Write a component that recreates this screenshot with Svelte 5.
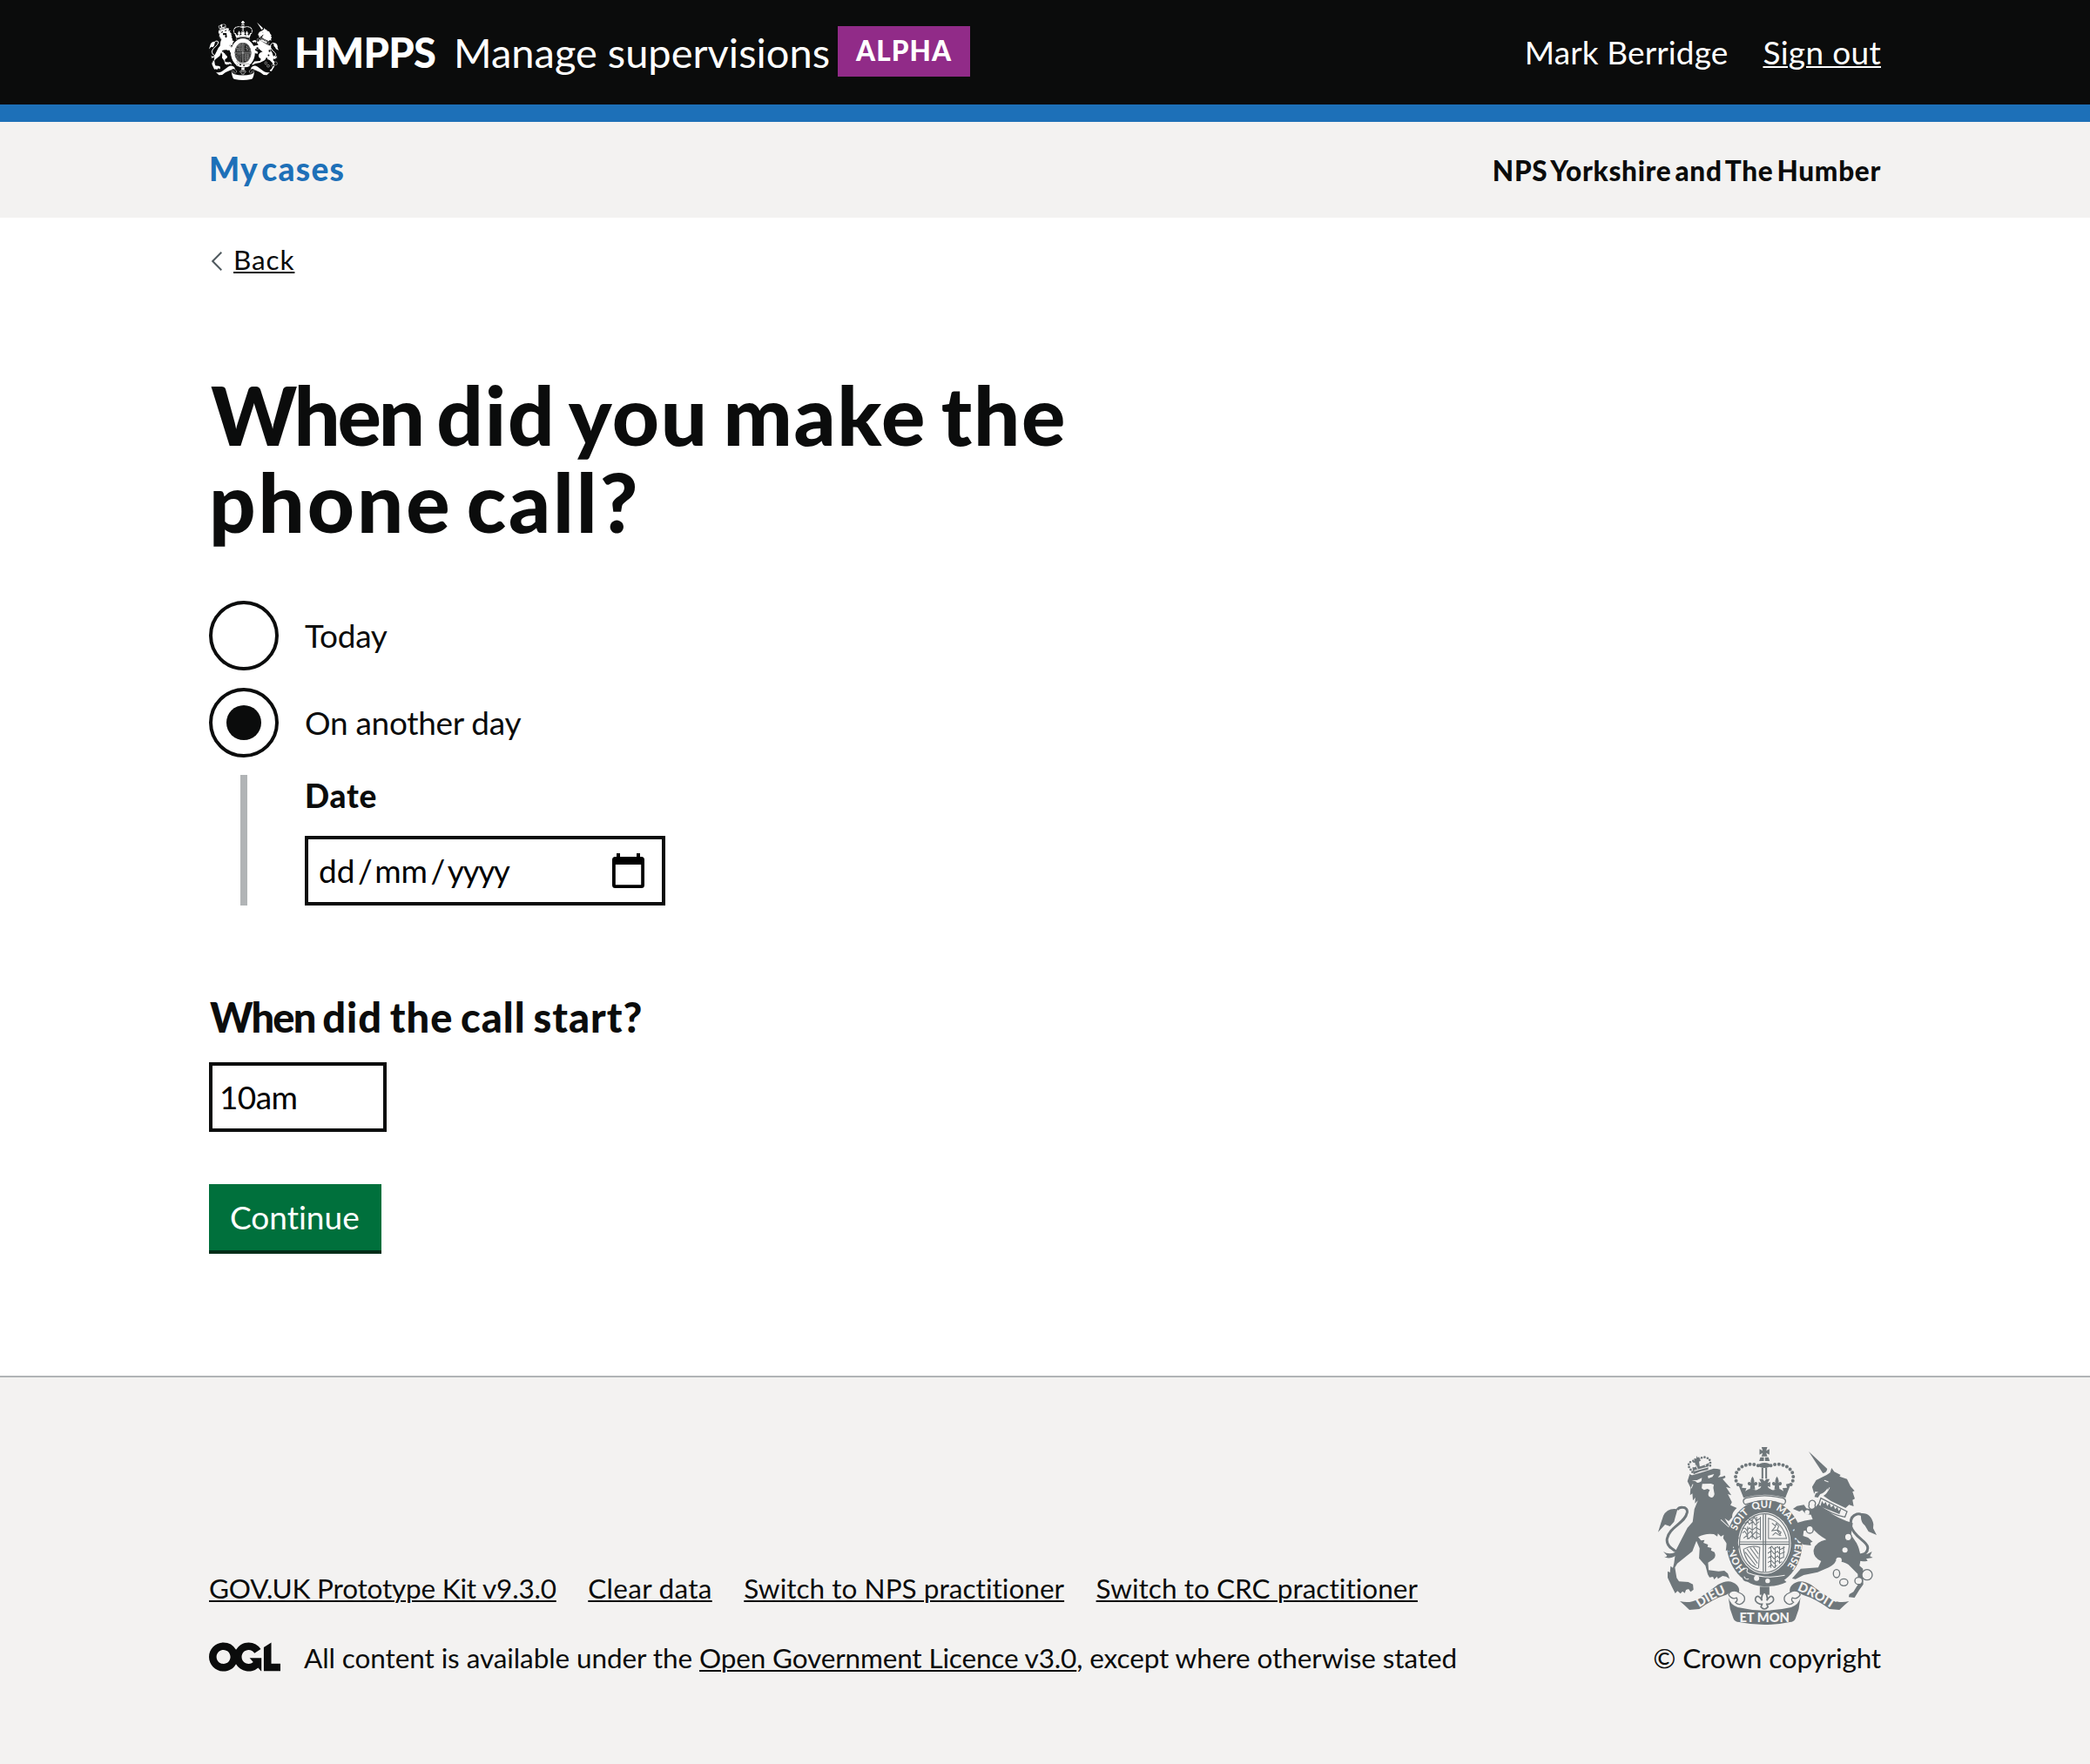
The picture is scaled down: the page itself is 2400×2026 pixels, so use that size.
<script>
  let when = $state('other');
  let startTime = $state('10am');
  const footerLinks = [
    'GOV.UK Prototype Kit v9.3.0',
    'Clear data',
    'Switch to NPS practitioner',
    'Switch to CRC practitioner'
  ];
  const motto = [
    { word: 'HONI', at: '0%' },
    { word: 'SOIT', at: '25.5%' },
    { word: 'QUI', at: '42.5%' },
    { word: 'MAL', at: '57%' },
    { word: 'Y', at: '72.5%' },
    { word: 'PENSE', at: '79%' }
  ];
</script>

{#snippet crest(kind)}
  <svg class="crest {kind}" viewBox="72 66 752 612" preserveAspectRatio="none" aria-hidden="true">
    <!-- royal crown -->
    <path d="M428 66h20l-4 13 11-6v19l-11-6 4 12h-20l4-12-11 6V73l11 6zM424 101h12v13h-16zM440 101h12l4 13h-16z" />
    <ellipse cx="438" cy="129" rx="21" ry="9" />
    <path class="beads" d="M416 130C385 117 347 132 340 160c-4 17 2 31 13 42M460 130c31-13 69 2 76 30 4 17-2 31-13 42" />
    <path d="M428 138h6v37h-6zM441 138h6v37h-6z" />
    <path d="M420 176h12l6 8 6-8h12l-7 14 9-4v18l-9-4 6 14h-34l6-14-9 4v-18l9 4z" />
    <path d="M397 167q9 12 5 22 10-8 12 3-1 8-10 6l2 14h-18l2-14q-9 2-10-6 2-11 12-3-4-10 5-22zM481 167q9 12 5 22 10-8 12 3-1 8-10 6l2 14h-18l2-14q-9 2-10-6 2-11 12-3-4-10 5-22z" />
    <path d="M346 190l18 4-4 12 16 2-4 10q12-10 22-9 16 10 24 1 20-12 40 0 8 9 24-1 10-1 22 9l-4-10 16-2-4-12 18-4-20 51Q438 219 366 241z" />
    <path class="outline" d="M374 242q64-17 128 0 11 4 8 14-3 10-12 6-60-20-120 0-9 4-12-6-3-10 8-14z" />

    <!-- garter and shield -->
    <ellipse cx="438" cy="397" rx="130" ry="149" />
    <ellipse class="hole" cx="438" cy="397" rx="91" ry="106" />
    <ellipse class="line" cx="438" cy="397" rx="86" ry="101" />
    <path class="line" d="M434 298v198M442 298v198M353 393h170M353 401h170" />
    <path class="thin" d="M362 346h10l6 8 8-10 10 8 12-9 14 8M370 330l10-8 6 10 12-10 8 12 14-11M384 312l8 8 12-12 6 12 12-8M362 362l8-6 8 12 12-12 8 12 10-10 14 9M366 380l10-8 8 10 12-12 10 12 16-9M380 340v44M396 316v66M411 306v78M424 306v80" />
    <path class="thin" d="M452 311q48 15 62 70h-62zM464 328l12 10 3-9 8 10-5 12 13 9-5 10-14-9-10 9M476 340l-12 14 17-2 14 20" />
    <path class="thin" d="M366 418q30-16 56-6l-4 68q-2 8-9 2-36-16-43-64M378 417l36 50M389 413l27 37M400 410l17 24M372 428l36 46" />
    <path class="thin" d="M452 416l11-8 8 10 12-9 9 10 16-8M450 432l12-9 9 11 12-9 8 10 17-8M450 448l12-7 9 10 12-10 8 10 14-6M450 464l12-7 9 10 12-10 8 8 8-4M452 480l10-9 9 10 10-8M460 410v72M475 410v72M490 408v60M504 408v40" />
    <path d="M362 486q12-16 22-3-2 8 8 12 46 17 85 4l37 32q-58 30-130-2-20 3-22-14-10-12 0-29z" />
    <path class="hole-line" d="M366 488q10-10 14 0-6 7 3 12 60 22 125 8M368 512q5 12 16 8" />
    <circle class="hole" cx="411" cy="518" r="9" />
    <circle class="hole" cx="449" cy="527" r="8" />
    {#if kind === 'full'}
      <path id="motto" class="guide" d="M373 486A103 120 0 1 1 509 484" />
      {#each motto as part}
        <text class="motto"><textPath href="#motto" startOffset={part.at}>{part.word}</textPath></text>
      {/each}
    {/if}

    <!-- lion -->
    <path d="M190 136q30 0 58-16l-4 24q-28 4-50 16z" />
    <path class="beads small" d="M190 152l-10-14q-8-16 6-22 10-5 19-1M207 115q8-14 27-14 16 4 18 16l-1 22" />
    <path d="M204 96l4 6 6-2-1 9 7 3-7 4 3 22-13 4-4-22-8-1 6-6-1-8 8 1z" />
    <path class="hole-thin" d="M196 148l50-14M202 128l6 14M232 116l3 16" />
    <path d="M173 184l8-26q6 6 12 4 40-12 70-22 14 0 23 3v18l-8 9 14-2 10-4 2 7-10 5 28 32-16-4 18 28-12-4 14 28-5 10 22 10q-18 16-16 32l-12 13-14-10 18 30 22 12 9 27-7 10 8 20-6 16-10-6-4-14-2 20-14 8 2-18-12 8 3-26-12-18 2-12-10 6-10-10-2 10-12-8q-30-4-54 10l10 12 12-2-4 10 16 6-2 8 14 4-2 8 12 6q8 18-6 26l-16 10 2 26 34 4 20-2 12 10 6 18-12-8-12-2-16 10-3-8-10 10-4-9-12 2-6-10-8-30-22-26 2-34-11-26-14 36-52 42-8 14 6 36 8 12 32 2 16 8 2 18-10 8-7-10-9 3-4 11-8-6-7 8-10-9-8 8-12-24-14-30v-22l8 4 2-22 8 6 4-16 6-44 40-78 18-20 6-44 12-30-10 10 1-20-8 10-2-24-8 6 2-26z" />
    <path class="hole" d="M188 181l18-1 17-8-2 12q-14 10-20 0zM243 165l22-6-6 10-14 5zM224 193l30-1 10 4-2 10 4 22q-4 16-16 10-8-4-4-16l4-8-8-4-12 4-8-6z" />
    <path class="hole-thin" d="M288 316l28 26M186 208l6-14" />
    <path class="tail" d="M144 430Q98 410 103 382c8-42 62-53 69-91q2-16-16-17-12-1-18 8M142 421l10-8" />
    <path d="M139 280q-35-6-49 23l-8 24-10 32 24-26 17 6 14-16q8-28 12-43zM150 416q-34 28-60 10l13 14q-1 6-11 3 24 16 58-17z" />

    <!-- unicorn -->
    <path d="M590 81l64 60q-2 14-15 15z" />
    <path d="M602 203l14-23 36-18 12-8 5-16 9 13 22 11-4 5 26 9 12 25 14 16-7 3 8 24-8 4 4 22-16-5-12 11-50-24-26-18q18-10 14-26-12 18-25 20l-8 12-12-2 4-12 10-5-11-2-4 8z" />
    <path class="hole-thin" d="M644 181l14 5M662 205q-8 20-28 27" />
    <path d="M622 262q-14 24-40 15l-8-12-24 4-14 10 22 9 10-5 12 14 18 2 6 16q-26 2-56 13l-6 20-3 14 9 20 24 20 26 3-2-10 8-3-16-14-17-6 2-17 20-4 8-8q18 24 50 42-40 8-44 38-1 24 26 36l-10 22-60 4-12 14-18 20 12 2 28-14 48-10 38-16q20-10 24-22 30 2 44 12l32 32 1 36-16 26-14 8-2 10 20 2 16-26 14-20-1-54-12-10q10-40-10-78l-19-29 6-40q-50-14-92-45z" />
    <path class="outline" d="M632 242l90 46-7 19q-50-10-91-41z" />
    <path d="M636 251l6 11 7-7 5 14 8-10 5 15 9-8 5 14 8-8 4 14 10-9-7 20-66-26z" />
    <path class="outline" d="M592 264a11 11 0 1 0 20 2 11 11 0 1 0-20-2zM582 350a12 13 0 1 0 24 0 12 13 0 1 0-24 0zM714 376a12 13 0 1 0 24 0 12 13 0 1 0-24 0zM675 502a11 14 0 1 0 22 0 11 14 0 1 0-22 0zM697 532a14 12 0 1 0 28 0 14 12 0 1 0-28 0zM749 527a13 12 0 1 0 26 0 13 12 0 1 0-26 0zM773 506a18 18 0 1 0 36 0 18 18 0 1 0-36 0z" />
    <circle class="hole" cx="715" cy="421" r="9" />
    <circle class="hole" cx="694" cy="456" r="10" />
    <circle class="hole" cx="585" cy="291" r="8" />
    <path class="tail" d="M762 438q34-2 31-28c-4-22-45-32-58-72q-4-34 21-41 14-4 22 8" />
    <path d="M760 296q44-10 53 36l-1 14 12 23-28-12-12-20q-16-12-14-38zM738 416q14 26 54 18l16-8-7 16 10 5-23 4 5 7q-40 8-56-22z" />

    <!-- motto ribbons and badge -->
    <path d="M147 597q34 9 61-7 42-28 70-50 40-24 66 2 10 12 6 25l-22-4-22 12q-46 14-92 49l-34 3q-14-14-33-30z" />
    <path d="M729 597q-34 9-61-7-42-28-70-50-40-24-66 2-10 12-6 25l22-4 22 12q46 14 92 49l34 3q14-14 33-30z" />
    <path class="outline" d="M350 567q26 10 18 30-14 20-30 4 10-6 4-16-16 8-27-10 2-14 20-14 8 0 15 6zM526 567q-26 10-18 30 14 20 30 4-10-6-4-16 16 8 27-10-2-14-20-14-8 0-15 6z" />
    <path d="M314 584q6 24 32 34 92 22 184 0 26-10 32-34l-6 40-11 32q-4 12-20 13-87 18-174 0-16-1-20-13l-11-32z" />
    <path d="M422 547h33v28h-33z" />
    <path class="badge" d="M438 563q14 18 8 32 14-24 22-10 6 14-14 22h-8l4 10q-12 14-24 0l4-10h-8q-20-8-14-22 8-14 22 10-6-14 8-32z" />
    {#if kind === 'full'}
      <path id="dieu" class="guide" d="M214 619Q268 583 336 558" />
      <path id="droit" class="guide" d="M550 559Q610 583 680 629" />
      <text class="ribbon"><textPath href="#dieu">DIEU</textPath></text>
      <text class="ribbon"><textPath href="#droit">DROIT</textPath></text>
      <text class="ribbon" x="352" y="668" textLength="172">ET MON</text>
    {/if}
  </svg>
{/snippet}

<header class="header">
  <div class="container header-row">
    <div class="brand">
      {@render crest('plain')}
      <span class="org">HMPPS</span>
      <span class="product">Manage supervisions</span>
      <strong class="phase">ALPHA</strong>
    </div>
    <div class="account">
      <span class="user">Mark Berridge</span>
      <a class="sign-out" href="#sign-out">Sign out</a>
    </div>
  </div>
</header>

<nav class="subnav">
  <div class="container subnav-row">
    <a class="cases" href="#cases">My cases</a>
    <span class="region">NPS Yorkshire and The Humber</span>
  </div>
</nav>

<main class="container main">
  <div class="back">
    <svg class="chevron" viewBox="0 0 12 22" aria-hidden="true"><path d="M11.3.7 1.2 11l10.100 10.300" /></svg>
    <a href="#back">Back</a>
  </div>

  <h1><span class="when">When</span> did you make the <br /><span class="last">phone call?</span></h1>

  <div class="radios">
    <label class="radio">
      <input type="radio" value="today" bind:group={when} />
      <span>Today</span>
    </label>
    <label class="radio">
      <input type="radio" value="other" bind:group={when} />
      <span>On another day</span>
    </label>
  </div>

  <div class="conditional">
    <div class="date-label">Date</div>
    <div class="date-input">
      <span class="date-text">dd<i>/</i>mm<i>/</i><span class="year">yyyy</span></span>
      <svg class="calendar" viewBox="0 0 37 40" aria-hidden="true">
        <path d="M5 0h4v4h19V0h4v4h1.500a3.500 3.500 0 0 1 3.500 3.500v29a3.500 3.500 0 0 1-3.500 3.500h-30A3.500 3.500 0 0 1 0 36.500v-29A3.500 3.500 0 0 1 3.500 4H5zM3.800 13v23.200h29.400V13z" fill-rule="evenodd" />
      </svg>
    </div>
  </div>

  <h2><span class="when">When</span> did the call start?</h2>
  <input class="time" type="text" bind:value={startTime} />
  <button class="continue" type="button">Continue</button>
</main>

<footer class="footer">
  <div class="container footer-row">
    <div class="footer-meta">
      <ul class="footer-links">
        {#each footerLinks as link}
          <li><a href="#footer">{link}</a></li>
        {/each}
      </ul>
      <div class="licence">
        <svg class="ogl" viewBox="0 0 483.2 195.7" aria-hidden="true">
          <path d="M421.5 142.8V.1l-50.7 32.3v161.1h112.4v-50.7zm-122.3-9.6A47.12 47.12 0 0 1 221 97.8c0-26 21.1-47.1 47.1-47.1 16.7 0 31.4 8.7 39.7 21.8l42.7-27.2A97.63 97.63 0 0 0 268.1 0c-36.5 0-68.3 20.1-85.1 49.7A98 98 0 0 0 97.800 0C43.900 0 0 43.900 0 97.800s43.900 97.800 97.800 97.800c36.500 0 68.300-20.100 85.100-49.700a97.760 97.760 0 0 0 149.600 25.400l19.400 22.200h3v-87.800h-80l24.300 27.500zM97.800 145c-26 0-47.100-21.100-47.100-47.100s21.100-47.100 47.100-47.100 47.100 21.100 47.100 47.100S123.800 145 97.800 145" />
        </svg>
        <p>All content is available under the <a href="#ogl">Open Government Licence v3.0</a>, except where otherwise stated</p>
      </div>
    </div>
    <div class="copyright">
      {@render crest('full')}
      <span>© Crown copyright</span>
    </div>
  </div>
</footer>

<style>
  :global(body) {
    background: #fff;
    color: #0b0c0c;
    font-family: Lato, 'Liberation Sans', sans-serif;
    font-variant-ligatures: none;
  }
  a {
    color: inherit;
    text-decoration-thickness: 2px;
    text-underline-offset: 2px;
  }
  .container {
    width: 1920px;
    margin: 0 auto;
  }

  .header {
    height: 140px;
    box-sizing: border-box;
    background: #0b0c0c;
    border-bottom: 20px solid #1d70b8;
    color: #fff;
    --hole: #0b0c0c;
  }
  .header-row {
    display: flex;
    justify-content: space-between;
    align-items: center;
    height: 120px;
  }
  .brand,
  .account {
    display: flex;
    align-items: center;
    white-space: nowrap;
  }
  .org,
  .product {
    font-size: 47px;
    line-height: 60px;
  }
  .org {
    width: 183px;
    margin-left: 18px;
    font-weight: 900;
    letter-spacing: -0.75px;
  }
  .product {
    width: 441px;
  }
  .phase {
    box-sizing: border-box;
    width: 152px;
    height: 58px;
    margin-bottom: 2px;
    padding-left: 21px;
    background: #912b88;
    font-size: 31.5px;
    font-weight: 900;
    line-height: 57px;
    letter-spacing: 1.1px;
  }
  .account {
    gap: 40px;
    font-size: 37px;
    line-height: 50px;
  }
  .user {
    letter-spacing: 0.12px;
  }
  .sign-out {
    letter-spacing: 0.32px;
  }

  .subnav {
    height: 110px;
    background: #f3f2f1;
  }
  .subnav-row {
    display: flex;
    justify-content: space-between;
    align-items: baseline;
    padding-top: 29px;
    font-weight: 900;
  }
  .cases {
    color: #1d70b8;
    font-size: 37px;
    line-height: 50px;
    letter-spacing: 1.3px;
    word-spacing: -6px;
    text-decoration: none;
  }
  .region {
    font-size: 31.5px;
    line-height: 40px;
    letter-spacing: 0.7px;
    word-spacing: -4px;
  }

  .back {
    display: flex;
    align-items: center;
    margin-top: 28px;
    font-size: 31.5px;
    line-height: 40px;
    letter-spacing: 0.9px;
  }
  .chevron {
    width: 12px;
    height: 22px;
    margin: 4px 13px 0 3px;
    fill: none;
    stroke: #505a5f;
    stroke-width: 2;
  }
  h1 {
    margin: 108px 0 64px;
    font-size: 94px;
    font-weight: 900;
    line-height: 100px;
    letter-spacing: 1.75px;
    word-spacing: -7.5px;
  }
  h1 .when {
    margin-left: 2px;
    letter-spacing: -3.2px;
  }
  .last {
    letter-spacing: 2.9px;
    word-spacing: -9px;
  }

  .radios {
    display: flex;
    flex-direction: column;
    gap: 20px;
  }
  .radio {
    display: flex;
    align-items: center;
    gap: 30px;
    height: 80px;
    font-size: 37px;
    line-height: 50px;
    letter-spacing: -0.3px;
  }
  .radio input {
    appearance: none;
    display: grid;
    place-items: center;
    box-sizing: border-box;
    width: 80px;
    height: 80px;
    margin: 0;
    border: 4px solid #0b0c0c;
    border-radius: 50%;
    background: #fff;
  }
  .radio input:checked::before {
    content: '';
    width: 40px;
    height: 40px;
    border-radius: 50%;
    background: #0b0c0c;
  }

  .conditional {
    height: 150px;
    margin: 20px 0 0 36px;
    padding-left: 66px;
    border-left: 8px solid #b1b4b6;
  }
  .date-label {
    margin-bottom: 23px;
    font-size: 37px;
    font-weight: 900;
    line-height: 47px;
    letter-spacing: 0.77px;
  }
  .date-input,
  .time {
    display: block;
    box-sizing: border-box;
    height: 80px;
    border: 4px solid #0b0c0c;
    border-radius: 0;
    background: #fff;
    color: #000;
    font-family: inherit;
    font-size: 37px;
  }
  .date-input {
    display: flex;
    justify-content: space-between;
    align-items: center;
    width: 414px;
    padding: 0 20px 0 12px;
  }
  .date-text {
    padding-bottom: 2px;
  }
  .date-text i {
    padding: 0 2.500px 0 3.500px;
    font-style: normal;
  }
  .year {
    letter-spacing: -1.4px;
  }
  .calendar {
    width: 37px;
    height: 40px;
    fill: #000;
  }
  h2 {
    margin: 98px 0 22px;
    font-size: 47px;
    font-weight: 900;
    line-height: 60px;
    letter-spacing: 1px;
    word-spacing: -3.500px;
  }
  h2 .when {
    margin-left: 1px;
    letter-spacing: -1.8px;
  }
  .time {
    width: 204px;
    padding: 0 8px 2px;
    letter-spacing: -0.6px;
  }
  .continue {
    display: block;
    width: 198px;
    height: 76px;
    margin: 60px 0 144px;
    padding: 0 0 0 24px;
    border: 0;
    background: #00703c;
    box-shadow: 0 4px 0 #002d18;
    color: #fff;
    font-family: inherit;
    font-size: 37px;
    font-variant-ligatures: none;
    line-height: 76px;
    text-align: left;
  }

  .footer {
    box-sizing: border-box;
    height: 446px;
    padding-top: 80px;
    border-top: 2px solid #b1b4b6;
    background: #f3f2f1;
    font-size: 31.5px;
    line-height: 40px;
    white-space: nowrap;
    --hole: #f3f2f1;
  }
  .footer-row {
    display: flex;
    justify-content: space-between;
    align-items: flex-end;
  }
  .footer-links {
    display: flex;
    gap: 36.5px;
    margin: 0 0 40px;
    padding: 0;
    list-style: none;
  }
  .footer-links li {
    letter-spacing: 0.04px;
  }
  .footer-links li:nth-child(1) {
    letter-spacing: -0.2px;
  }
  .footer-links li:nth-child(2) {
    letter-spacing: 0.28px;
  }
  .licence {
    display: flex;
    gap: 27px;
    height: 40px;
    letter-spacing: -0.09px;
  }
  .licence p {
    margin: 0;
  }
  .licence a {
    letter-spacing: -0.15px;
  }
  .ogl {
    width: 82px;
    height: 34px;
    margin-top: 2px;
    fill: #0b0c0c;
  }
  .copyright {
    display: flex;
    flex-direction: column;
    align-items: center;
    gap: 18px;
    letter-spacing: -0.15px;
  }

  .crest {
    fill: currentColor;
    color: #fff;
  }
  .crest.plain {
    width: 80px;
    height: 68px;
    margin-bottom: 4px;
  }
  .crest.full {
    width: 251px;
    height: 204px;
    color: #6f777b;
  }
  .hole {
    fill: var(--hole);
  }
  .outline {
    fill: var(--hole);
    stroke: currentColor;
    stroke-width: 4;
  }
  .badge {
    fill: var(--hole);
    stroke: currentColor;
    stroke-width: 5;
  }
  .line,
  .thin,
  .tail,
  .beads,
  .guide,
  .hole-line,
  .hole-thin {
    fill: none;
    stroke: currentColor;
    stroke-width: 3.5;
  }
  .thin {
    stroke-width: 3;
  }
  .tail {
    stroke-width: 9;
  }
  .beads {
    stroke-width: 12;
    stroke-linecap: round;
    stroke-dasharray: 0 14.2;
  }
  .beads.small {
    stroke-width: 8;
    stroke-dasharray: 0 10;
  }
  .hole-line,
  .hole-thin {
    stroke: var(--hole);
    stroke-width: 3;
  }
  .guide {
    stroke: none;
  }
  .motto,
  .ribbon {
    fill: var(--hole);
    font-family: Lato, sans-serif;
    font-weight: 900;
    font-size: 34px;
    letter-spacing: 0;
  }
  .ribbon {
    font-size: 44px;
  }
</style>
